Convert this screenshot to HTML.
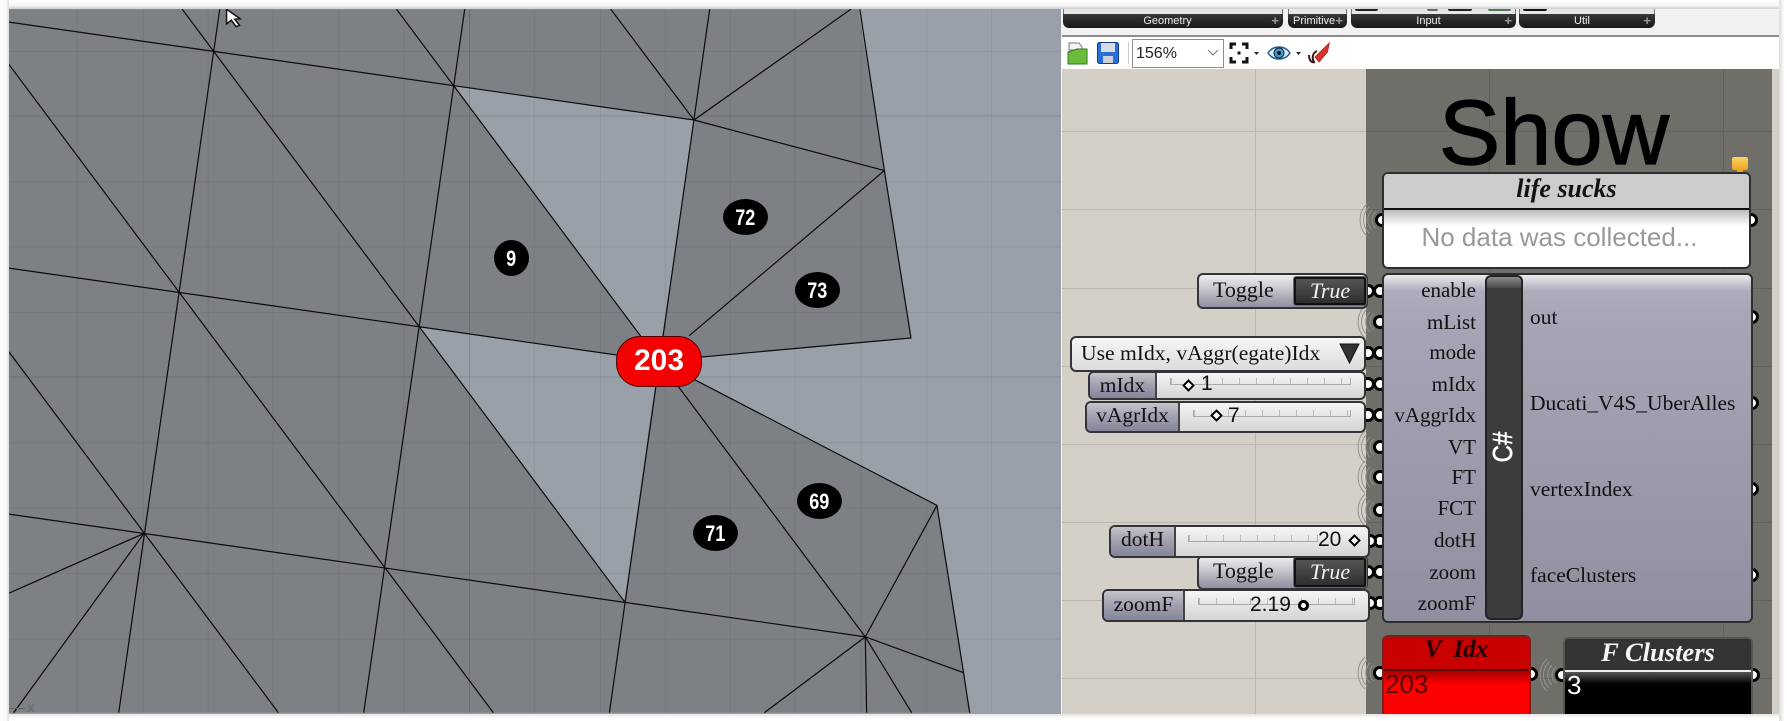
<!DOCTYPE html>
<html><head><meta charset="utf-8"><style>
html,body{margin:0;padding:0;background:#fff}
#p{position:relative;width:1787px;height:721px;overflow:hidden;background:#f6f6f6;font-family:"Liberation Sans",sans-serif}
#p div{position:absolute;box-sizing:border-box;white-space:nowrap}
.t{font-family:"Liberation Serif",serif;font-size:21px;color:#111;line-height:26px;height:26px}
.o{font-size:21.5px}
.r{text-align:right}
.lab{background:#000;border-radius:50%;color:#fff;font-weight:bold;font-size:22px;text-align:center;height:36px;line-height:37px;width:45px}
.lab span{display:inline-block;transform:scaleX(.82)}
.gl{background:#bcb8af}
.gd{background:#62615c}
.cp{width:14px;height:14px;border-radius:50%;border:3.5px solid #000;background:#fff}
.tg{border:2px solid #33343a;border-radius:6px;background:linear-gradient(#eeeef0 0,#c9c9d0 40%,#8e8e9e 100%)}
.tr{background:linear-gradient(#555,#2e2e2e);border:2px solid #111;outline:1px solid #666;border-radius:2px;color:#f2f2f2;font:italic 22px/23px "Liberation Serif",serif;text-align:center}
.sl{border:2px solid #33343a;border-radius:6px;background:linear-gradient(#f5f5f5,#d4d4d4)}
.sn{left:0;top:0;bottom:0;background:linear-gradient(#c4c4cc 0,#a2a2b2 45%,#85859a 100%);border-right:2px solid #444;border-radius:4px 0 0 4px;font:21.5px/24px "Liberation Serif",serif;color:#111;text-align:center}
.trk{height:7px;border-bottom:1px solid #aaa;border-left:1px solid #aaa;border-right:1px solid #aaa;background:repeating-linear-gradient(90deg,#bbb 0 1px,transparent 1px 17px)}
.d{width:9px;height:9px;background:#fff;border:2px solid #000;transform:rotate(45deg)}
.num{font:21px/26px "Liberation Sans",sans-serif;color:#111}
.btn{background:linear-gradient(#383838,#181818);border-radius:0 0 6px 6px;color:#eee;font-size:11px;line-height:14px;text-align:center;top:14px;height:14px}
.btn span{position:absolute;right:4px;top:0;color:#999;font-weight:bold;font-size:13px}
.up{top:9px;height:5px;background:#e6e6e6;border-left:1px solid #777;border-right:1px solid #777}
</style></head><body><div id="p">

<!-- Viewport -->
<div style="left:9px;top:9px;width:1052px;height:705px;background:#9aa0a9;overflow:hidden">
<svg style="position:absolute;left:-9px;top:-9px" width="1070" height="721" viewBox="0 0 1568 1568" preserveAspectRatio="none">
<path fill="#7d8185" fill-rule="evenodd" d="M13 20H1258L1296 371 1335 735 965 785 1373 1099 1412 1463 1421 1550H13Z M666 186L1017 261 965 785Z M614 710L965 785 915 1308Z"/>
<g stroke="#000" stroke-opacity=".06" fill="none">
<path vector-effect="non-scaling-stroke" d="M113 20V1550M210 20V1550M305 20V1550M400 20V1550M497 20V1550M592 20V1550M783 20V1550M880 20V1550M975 20V1550M1070 20V1550M1165 20V1550M1262 20V1550M1358 20V1550M1453 20V1550M13 112H1555M13 395H1555M13 537H1555M13 680H1555M13 963H1555M13 1105H1555M13 1247H1555M13 1390H1555"/>
</g>
<g stroke="#000" stroke-opacity=".13" fill="none">
<path d="M688 20V1550M13 252H1555M13 820H1555" vector-effect="non-scaling-stroke"/>
</g>
<g stroke="#0a0a0a" stroke-width="1.2" fill="none">
<path vector-effect="non-scaling-stroke" d="M13 48L1017 261 1296 371M13 583L965 785M13 1118L1268 1385 1412 1463M1260 20L1296 371 1335 735 965 785 1373 1099 1412 1463 1421 1550M322 20L174 1550M681 20L533 1550M1040 20L893 1550M267 20L915 1308M13 140L723 1550M581 20L1268 1385M895 20L1017 261 1247 20M1296 371L1010 730M13 765L408 1550M211 1160L13 1290M211 1160L20 1550M1268 1385L1373 1099M1268 1385L1120 1550M1268 1385L1270 1550M1268 1385L1336 1550"/>
</g>
<path d="M332 20V52L339 44 346 58 351 55 344 42 352 41Z" fill="#fff" stroke="#111" stroke-width="1.5" vector-effect="non-scaling-stroke"/>
</svg>
</div>
<div style="left:9px;top:708px;width:16px;height:1px;background:#666"></div>
<div style="left:27px;top:699px;font-size:14px;font-weight:bold;color:#6a6e72;width:12px;height:16px;line-height:16px">x</div>

<div class="lab" style="left:494px;top:240px;width:35px"><span>9</span></div>
<div class="lab" style="left:723px;top:199px"><span>72</span></div>
<div class="lab" style="left:795px;top:272px"><span>73</span></div>
<div class="lab" style="left:693px;top:515px"><span>71</span></div>
<div class="lab" style="left:797px;top:483px"><span>69</span></div>
<div style="left:616px;top:336px;width:86px;height:51px;background:#f50000;border:1px solid #500;border-radius:24px;color:#fff;font-weight:bold;font-size:30px;line-height:48px;text-align:center">203</div>

<!-- Top strip -->
<div style="left:1062px;top:9px;width:717px;height:28px;background:#f2f2f2;border-bottom:2px solid #8e8e8e"></div>
<div class="up" style="left:1063px;width:220px"></div>
<div class="up" style="left:1288px;width:59px"></div>
<div class="up" style="left:1351px;width:165px"></div>
<div class="up" style="left:1519px;width:136px"></div>
<div style="left:1355px;top:9px;width:23px;height:2px;background:#222;border-radius:0 0 6px 6px"></div>
<div style="left:1427px;top:9px;width:11px;height:2px;background:#666;border-radius:0 0 5px 5px"></div>
<div style="left:1448px;top:9px;width:24px;height:2px;background:#222;border-radius:0 0 6px 6px"></div>
<div style="left:1488px;top:9px;width:23px;height:2px;background:#575;border-radius:0 0 6px 6px"></div>
<div style="left:1523px;top:9px;width:24px;height:2px;background:#111;border-radius:0 0 6px 6px"></div>
<div class="btn" style="left:1063px;width:220px;padding-right:11px">Geometry<span>+</span></div>
<div class="btn" style="left:1288px;width:59px;text-align:left;padding-left:5px">Primitive<span>+</span></div>
<div class="btn" style="left:1351px;width:165px;padding-right:10px">Input<span>+</span></div>
<div class="btn" style="left:1519px;width:136px;padding-right:10px">Util<span>+</span></div>

<!-- Toolbar -->
<div style="left:1062px;top:37px;width:717px;height:32px;background:#fff"></div>
<svg style="position:absolute;left:1062px;top:37px" width="280" height="32" viewBox="0 0 280 32">
<path d="M7 6h10l3 4v3H7z" fill="#f4f4f4" stroke="#777"/>
<path d="M6 15l9-3h10v15H6z" fill="#6cbb3c" stroke="#2f7d18"/>
<rect x="35.500" y="5.500" width="21" height="21" rx="2" fill="#2a6fd6" stroke="#123f90"/>
<rect x="39" y="6" width="14" height="9" fill="#d7dbe2"/>
<rect x="41" y="19" width="10" height="7" fill="#c9d1dc"/>
<path d="M66.500 5v22" stroke="#ccc"/>
<path d="M169 12V7h5M180 7h5v5M185 20v5h-5M174 25h-5v-5" fill="none" stroke="#111" stroke-width="3"/>
<rect x="175.500" y="14.500" width="3" height="3" fill="#111"/>
<path d="M192 15h5l-2.500 3z" fill="#222"/><path d="M234 15h5l-2.500 3z" fill="#222"/>
<path d="M206 16c5-8 17-8 22 0-5 8-17 8-22 0z" fill="#d7eef8" stroke="#2a5d8a" stroke-width="1.500"/>
<circle cx="217" cy="16" r="5" fill="#3aa0d6" stroke="#123"/>
<circle cx="217" cy="16" r="2" fill="#111"/>
<path d="M247 18C247 24 250 26 253 25M255 14C250 16 250 22 252 25" fill="none" stroke="#3a1a10" stroke-width="2"/>
<path d="M253 20L267.300 6 265.500 15 257 25z" fill="#d9342b" stroke="#a8201a" stroke-width=".8"/>
</svg>
<div style="left:1132px;top:39px;width:92px;height:29px;border:1px solid #8e8e8e;background:#fff;font-size:16px;line-height:27px;padding-left:3px;color:#222">156%</div>
<svg style="position:absolute;left:1207px;top:49px" width="12" height="8"><path d="M1 1l5 5 5-5" fill="none" stroke="#777"/></svg>

<!-- Canvas -->
<div style="left:1062px;top:69px;width:717px;height:645px;background:#d4d0c8;overflow:hidden"></div>
<div style="left:1366px;top:69px;width:406px;height:645px;background:#6f6e69"></div>
<div class="gl" style="left:1255px;top:69px;width:1px;height:645px"></div>
<div class="gd" style="left:1489px;top:69px;width:1px;height:645px"></div>
<div class="gd" style="left:1723px;top:69px;width:1px;height:645px"></div>
<div class="gl" style="left:1062px;top:131px;width:304px;height:1px"></div><div class="gd" style="left:1366px;top:131px;width:406px;height:1px"></div>
<div class="gl" style="left:1062px;top:209px;width:304px;height:1px"></div><div class="gd" style="left:1366px;top:209px;width:406px;height:1px"></div>
<div class="gl" style="left:1062px;top:288px;width:304px;height:1px"></div><div class="gd" style="left:1366px;top:288px;width:406px;height:1px"></div>
<div class="gl" style="left:1062px;top:366px;width:304px;height:1px"></div><div class="gd" style="left:1366px;top:366px;width:406px;height:1px"></div>
<div class="gl" style="left:1062px;top:444px;width:304px;height:1px"></div><div class="gd" style="left:1366px;top:444px;width:406px;height:1px"></div>
<div class="gl" style="left:1062px;top:522px;width:304px;height:1px"></div><div class="gd" style="left:1366px;top:522px;width:406px;height:1px"></div>
<div class="gl" style="left:1062px;top:600px;width:304px;height:1px"></div><div class="gd" style="left:1366px;top:600px;width:406px;height:1px"></div>
<div class="gl" style="left:1062px;top:678px;width:304px;height:1px"></div><div class="gd" style="left:1366px;top:678px;width:406px;height:1px"></div>

<div style="left:1364px;top:78px;width:380px;height:110px;font-size:92px;line-height:110px;text-align:center;color:#000;-webkit-text-stroke:1.2px #000">Show</div>

<!-- ripples -->
<svg style="position:absolute;left:1340px;top:190px" width="240" height="520" fill="none" stroke="#94938e">
<defs><path id="rp" d="M-6 -8A10 10 0 0 0 -6 8M-10 -10A14 14 0 0 0 -10 10M-13 -13A18 18 0 0 0 -13 13M-15 -16A22 22 0 0 0 -15 16"/></defs>
<use href="#rp" x="42" y="30"/>
<use href="#rp" x="40" y="132"/>
<use href="#rp" x="40" y="257"/>
<use href="#rp" x="40" y="287"/>
<use href="#rp" x="40" y="320"/>
<use href="#rp" x="40" y="483"/>
<use href="#rp" x="222" y="485"/>
</svg>

<!-- Ports -->
<div class="cp" style="left:1375px;top:213px"></div><div class="cp" style="left:1744px;top:213px"></div>
<div class="cp" style="left:1373px;top:284px"></div><div class="cp" style="left:1373px;top:315px"></div><div class="cp" style="left:1373px;top:346px"></div><div class="cp" style="left:1373px;top:377px"></div><div class="cp" style="left:1373px;top:408px"></div><div class="cp" style="left:1373px;top:440px"></div><div class="cp" style="left:1373px;top:470px"></div><div class="cp" style="left:1373px;top:503px"></div><div class="cp" style="left:1373px;top:534px"></div><div class="cp" style="left:1373px;top:565px"></div><div class="cp" style="left:1373px;top:596px"></div>
<div class="cp" style="left:1361px;top:284px"></div><div class="cp" style="left:1361px;top:346px"></div><div class="cp" style="left:1361px;top:377px"></div><div class="cp" style="left:1361px;top:408px"></div><div class="cp" style="left:1363px;top:534px"></div><div class="cp" style="left:1361px;top:565px"></div><div class="cp" style="left:1363px;top:596px"></div>
<div class="cp" style="left:1745px;top:310px"></div><div class="cp" style="left:1745px;top:396px"></div><div class="cp" style="left:1745px;top:482px"></div><div class="cp" style="left:1745px;top:568px"></div>
<div class="cp" style="left:1373px;top:666px"></div><div class="cp" style="left:1524px;top:667px"></div><div class="cp" style="left:1555px;top:668px"></div><div class="cp" style="left:1746px;top:668px"></div>

<!-- Panel -->
<div style="left:1732px;top:157px;width:16px;height:13px;background:linear-gradient(#f9d36a,#eea51f);border-radius:2px"></div>
<div style="left:1737px;top:170px;width:6px;height:4px;background:#eea51f"></div>
<div style="left:1382px;top:172px;width:369px;height:97px;background:#fff;border:2px solid #2e2e2e;border-radius:6px;overflow:hidden">
<div style="left:0;top:0;right:0;height:36px;background:#ccc;border-bottom:2px solid #111;text-align:center;font:italic bold 26px/29px 'Liberation Serif',serif;color:#111">life sucks</div>
<div style="left:0;top:36px;right:0;height:16px;background:linear-gradient(#bbb,#fff)"></div>
<div style="left:0;top:47px;right:14px;height:32px;text-align:center;font-size:26px;line-height:32px;color:#999">No data was collected...</div>
</div>

<!-- Component -->
<div style="left:1382px;top:273px;width:371px;height:350px;border:2px solid #2e2e2e;border-radius:6px;background:linear-gradient(#e9e9ee 0,#adadbc 16px,#a6a6b6 40px,#8f8f9f 100%)"></div>
<div style="left:1485px;top:275px;width:38px;height:345px;background:#3c3c3c;border:2px solid #222;border-radius:6px"></div>
<div style="left:1487px;top:277px;width:34px;height:11px;background:linear-gradient(#8a8a8a,#4a4a4a);border-radius:4px 4px 0 0"></div>
<div style="left:1483px;top:432px;width:42px;height:30px;color:#fff;font-weight:normal;font-size:24px;line-height:30px;text-align:center;transform:rotate(-90deg) scale(1,1.15);-webkit-text-stroke:.5px #fff">C#</div>
<div class="t r" style="left:1380px;width:96px;top:277px">enable</div>
<div class="t r" style="left:1380px;width:96px;top:309px">mList</div>
<div class="t r" style="left:1380px;width:96px;top:339px">mode</div>
<div class="t r" style="left:1380px;width:96px;top:371px">mIdx</div>
<div class="t r" style="left:1380px;width:96px;top:402px">vAggrIdx</div>
<div class="t r" style="left:1380px;width:96px;top:434px">VT</div>
<div class="t r" style="left:1380px;width:96px;top:464px">FT</div>
<div class="t r" style="left:1380px;width:96px;top:495px">FCT</div>
<div class="t r" style="left:1380px;width:96px;top:527px">dotH</div>
<div class="t r" style="left:1380px;width:96px;top:559px">zoom</div>
<div class="t r" style="left:1380px;width:96px;top:590px">zoomF</div>
<div class="t o" style="left:1530px;top:304px">out</div>
<div class="t o" style="left:1530px;top:390px">Ducati_V4S_UberAlles</div>
<div class="t o" style="left:1530px;top:476px">vertexIndex</div>
<div class="t o" style="left:1530px;top:562px">faceClusters</div>

<!-- Toggles -->
<div class="tg" style="left:1197px;top:273px;width:171px;height:36px"></div>
<div class="t" style="left:1213px;top:277px;font-size:22px">Toggle</div>
<div class="tr" style="left:1294px;top:277px;width:72px;height:28px">True</div>
<div class="tg" style="left:1197px;top:555px;width:171px;height:35px"></div>
<div class="t" style="left:1213px;top:558px;font-size:22px">Toggle</div>
<div class="tr" style="left:1294px;top:558px;width:72px;height:29px">True</div>

<!-- Dropdown -->
<div style="left:1070px;top:336px;width:296px;height:36px;background:linear-gradient(#f6f6f6,#dcdcdc);border:2px solid #33343a;border-radius:6px"></div>
<div class="t" style="left:1081px;top:340px;font-size:21.6px">Use mIdx, vAggr(egate)Idx</div>
<svg style="position:absolute;left:1339px;top:343px" width="21" height="21"><path d="M1 1h19l-9.500 19z" fill="#333" stroke="#111"/></svg>

<!-- Sliders -->
<div class="sl" style="left:1088px;top:371px;width:278px;height:29px"><div class="sn" style="width:67px">mIdx</div></div>
<div class="trk" style="left:1170px;top:378px;width:181px"></div>
<div class="d" style="left:1184px;top:381px"></div>
<div class="num" style="left:1201px;top:371px">1</div>

<div class="sl" style="left:1085px;top:401px;width:281px;height:32px"><div class="sn" style="width:93px;line-height:25px">vAgrIdx</div></div>
<div class="trk" style="left:1193px;top:410px;width:158px"></div>
<div class="d" style="left:1212px;top:411px"></div>
<div class="num" style="left:1228px;top:403px">7</div>

<div class="sl" style="left:1109px;top:525px;width:261px;height:33px"><div class="sn" style="width:65px;line-height:25px">dotH</div></div>
<div class="trk" style="left:1188px;top:535px;width:130px"></div>
<div class="num" style="left:1318px;top:527px">20</div>
<div class="d" style="left:1350px;top:536px"></div>

<div class="sl" style="left:1102px;top:589px;width:268px;height:33px"><div class="sn" style="width:81px;line-height:27px">zoomF</div></div>
<div class="trk" style="left:1198px;top:598px;width:157px"></div>
<div class="num" style="left:1250px;top:592px">2.19</div>
<div style="left:1298px;top:600px;width:11px;height:11px;border-radius:50%;border:3px solid #000;background:#fff"></div>

<!-- Panels bottom -->
<div style="left:1382px;top:635px;width:149px;height:79px;border:2px solid #7a2020;border-bottom:none;border-radius:6px 6px 0 0;background:#f00;overflow:hidden">
<div style="left:0;top:0;right:0;height:34px;background:#c80000;border-bottom:2px solid #500;text-align:center;font:italic bold 25px/26px 'Liberation Serif',serif;color:#200;white-space:pre">V  Idx</div>
<div style="left:0;top:34px;right:0;height:14px;background:linear-gradient(#a00,#f00)"></div>
<div style="left:1px;top:32px;font-size:26px;line-height:30px;color:#5a0000">203</div>
</div>
<div style="left:1563px;top:637px;width:190px;height:77px;border:2px solid #555;border-bottom:none;border-radius:6px 6px 0 0;background:#000;overflow:hidden">
<div style="left:0;top:0;right:0;height:33px;background:#333;border-bottom:2px solid #eee;text-align:center;font:italic bold 26.500px/26px 'Liberation Serif',serif;color:#f5f5f5">F Clusters</div>
<div style="left:0;top:33px;right:0;height:12px;background:linear-gradient(#555,#000)"></div>
<div style="left:2px;top:31px;font-size:26px;line-height:30px;color:#fff">3</div>
</div>

<!-- Frame -->
<div style="left:0;top:0;width:1787px;height:9px;background:linear-gradient(#fff,#f6f6f6 60%,#cfcfcf)"></div>
<div style="left:0;top:714px;width:1787px;height:7px;background:linear-gradient(#e4e4e4,#fff 60%)"></div>
<div style="left:0;top:0;width:9px;height:721px;background:linear-gradient(90deg,#fff,#f8f8f8 70%,#dcdcdc)"></div>
<div style="left:1779px;top:0;width:8px;height:721px;background:linear-gradient(90deg,#dcdcdc,#fff 70%)"></div>
</div></body></html>
